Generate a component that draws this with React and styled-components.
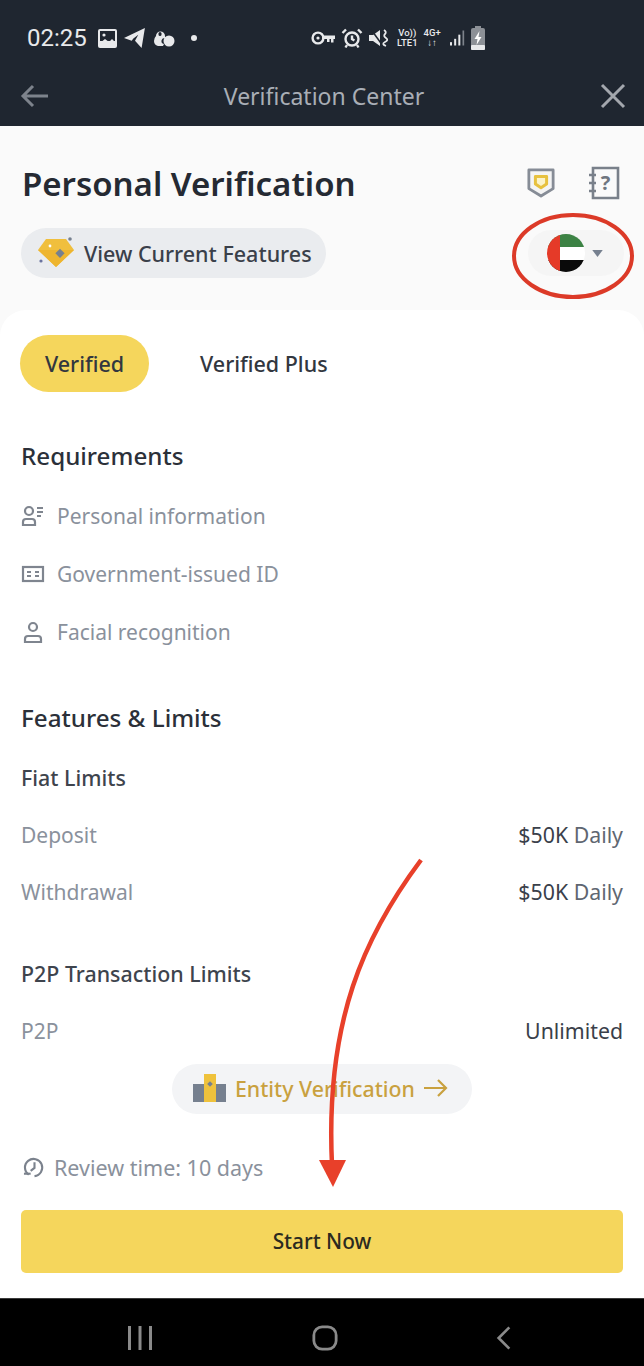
import React from "react";
import styled, { createGlobalStyle } from "styled-components";

const GlobalStyle = createGlobalStyle`
  html, body {
    margin: 0;
    padding: 0;
    background: #000;
  }
  * {
    box-sizing: border-box;
  }
  body {
    font-family: "Noto Sans", "Liberation Sans", sans-serif;
  }
`;

const Screen = styled.div`
  position: relative;
  width: 644px;
  height: 1366px;
  display: flex;
  flex-direction: column;
  overflow: hidden;
  background: #fafafa;
`;

const DarkTop = styled.div`
  height: 126px;
  background: #1f2630;
  flex-shrink: 0;
`;

const StatusBar = styled.div`
  height: 76px;
  padding-left: 27px;
  display: flex;
  align-items: center;
  color: #e8e9eb;
`;

const Clock = styled.span`
  font-family: Roboto, sans-serif;
  font-size: 24px;
  width: 71px;
`;

const NotifyIcons = styled.div`
  width: 213px;
  display: flex;
  align-items: center;
  gap: 7px;
`;

const SystemIcons = styled.div`
  display: flex;
  align-items: center;
  gap: 6px;
`;

const TinyStack = styled.span`
  display: flex;
  flex-direction: column;
  align-items: center;
  margin-right: ${(props) => props.$after || 0}px;
  font-family: Roboto, sans-serif;
  font-size: 9.5px;
  line-height: 10px;
  font-weight: 500;
  color: #e8e9eb;
`;

const Header = styled.div`
  height: 40px;
  padding: 0 18px 0 20px;
  display: flex;
  align-items: center;
  justify-content: space-between;
`;

const HeaderTitle = styled.span`
  font-size: 23px;
  color: #a9aeb6;
`;

const Summary = styled.div`
  height: 184px;
  padding: 31px 10px 0 22px;
  flex-shrink: 0;
`;

const TitleRow = styled.div`
  height: 52px;
  display: flex;
  align-items: center;
  justify-content: space-between;
`;

const PageTitle = styled.h1`
  margin: 0;
  font-size: 33px;
  font-weight: 600;
  color: #252a33;
`;

const TitleIcons = styled.div`
  display: flex;
  align-items: center;
  gap: 33px;
  padding-right: 14px;
`;

const SubRow = styled.div`
  margin-top: 19px;
  display: flex;
  align-items: center;
  justify-content: space-between;
`;

const FeaturesPill = styled.div`
  width: 305px;
  height: 50px;
  margin-left: -1px;
  padding-left: 16px;
  border-radius: 25px;
  background: #eaecef;
  display: flex;
  align-items: center;
  gap: 9px;
  font-size: 21.5px;
  font-weight: 500;
  color: #3a404a;
`;

const FlagPill = styled.div`
  width: 96px;
  height: 46px;
  margin-right: 10px;
  padding-left: 19px;
  border-radius: 23px;
  background: #f5f5f5;
  display: flex;
  align-items: center;
  gap: 7px;
`;

const Sheet = styled.div`
  flex: 1;
  padding: 25px 21px 0;
  background: #fff;
  border-radius: 26px 26px 0 0;
  display: flex;
  flex-direction: column;
`;

const Tabs = styled.div`
  display: flex;
  align-items: center;
  gap: 51px;
  margin-left: -1px;
`;

const Tab = styled.div`
  height: 57px;
  width: ${(props) => (props.$active ? "129px" : "auto")};
  border-radius: 29px;
  background: ${(props) => (props.$active ? "#f5d65c" : "transparent")};
  display: flex;
  align-items: center;
  justify-content: center;
  font-size: 21.5px;
  font-weight: 500;
  color: #32373f;
`;

const SectionTitle = styled.h2`
  margin: 0;
  height: 40px;
  margin-top: ${(props) => props.$top}px;
  display: flex;
  align-items: center;
  font-size: 24.2px;
  font-weight: 500;
  color: #2b3039;
`;

const GroupTitle = styled.h3`
  margin: 0;
  height: 40px;
  margin-top: ${(props) => props.$top}px;
  display: flex;
  align-items: center;
  font-size: 21.4px;
  font-weight: 500;
  color: #3e444d;
`;

const Requirement = styled.div`
  height: 58px;
  margin-top: ${(props) => props.$top || 0}px;
  display: flex;
  align-items: center;
  gap: 12px;
  font-size: 21px;
  color: #8a919c;
`;

const LimitRow = styled.div`
  height: 57px;
  margin-top: ${(props) => props.$top || 0}px;
  display: flex;
  align-items: center;
  justify-content: space-between;
  font-size: 21px;
  color: #8a919c;
`;

const LimitValue = styled.span`
  font-size: 21.3px;
  color: #3a404a;

  em {
    font-style: normal;
    color: #5f6671;
  }
`;

const EntityPill = styled.div`
  align-self: center;
  width: 300px;
  height: 50px;
  margin-top: 5px;
  padding: 0 0 2px 21px;
  border-radius: 25px;
  background: #f3f4f6;
  display: flex;
  align-items: center;
  gap: 9px;
  font-size: 21.3px;
  font-weight: 500;
  color: #c9a13f;
`;

const ReviewRow = styled.div`
  height: 46px;
  margin-top: 30px;
  padding-left: 2px;
  display: flex;
  align-items: center;
  gap: 8px;
  font-size: 21.5px;
  color: #8a919c;
`;

const StartButton = styled.button`
  height: 63px;
  margin-top: 20px;
  padding: 0 0 2px;
  border: 0;
  border-radius: 5px;
  background: #f5d65c;
  font-family: inherit;
  font-size: 20.8px;
  font-weight: 500;
  color: #2b2a20;
`;

const NavBar = styled.div`
  height: 68px;
  flex-shrink: 0;
  background: #000;
  border-top: 1px solid #3a3a3a;
  display: flex;
  align-items: center;
  justify-content: space-between;
  padding: 10px 132px 0 127px;
`;

const Annotation = styled.svg`
  position: absolute;
  left: 0;
  top: 0;
  pointer-events: none;
`;

const iconStroke = "#7f858f";

const KeyIcon = () => (
  <svg width="24" height="16" viewBox="0 0 24 16">
    <circle cx="7" cy="8" r="5.4" fill="none" stroke="#e8e9eb" strokeWidth="2.4" />
    <circle cx="7" cy="8" r="1.6" fill="#e8e9eb" />
    <path d="M11 5.500h13V9h-1.500v3.500h-2.500V9h-1.500v3h-2.500V9H11z" fill="#e8e9eb" />
  </svg>
);

const AlarmIcon = () => (
  <svg width="22" height="22" viewBox="0 0 22 22" fill="none" stroke="#e8e9eb" strokeWidth="2.4">
    <circle cx="11" cy="12" r="6.5" />
    <path d="M11 8.5V12l2.4 1.6M1.5 6 5 2.5M20.500 6 17 2.500M6 18l-1.500 2.500M16 18l1.500 2.500" />
  </svg>
);

const MuteIcon = () => (
  <svg width="22" height="22" viewBox="0 0 22 22" fill="#e8e9eb">
    <path d="M0 8h4l7-5v16l-7-5H0z" />
    <path d="M1 1l13 18" stroke="#1f2630" strokeWidth="1.5" />
    <path d="M15 3q3 2 1 4t1 4-1 4 1 4" fill="none" stroke="#e8e9eb" strokeWidth="1.8" />
  </svg>
);

const SignalIcon = () => (
  <svg width="15" height="20" viewBox="0 0 18 20" fill="#e8e9eb">
    <rect x="0" y="15" width="2.400" height="4" />
    <rect x="5" y="11" width="2.400" height="8" />
    <rect x="10" y="6" width="2.400" height="13" />
    <rect x="15" y="1" width="2" height="18" fill="#7d828a" />
  </svg>
);

const BatteryIcon = () => (
  <svg width="14" height="24" viewBox="0 0 14 24">
    <rect x="4" y="0" width="6" height="3" fill="#8c9096" />
    <rect x="0" y="2" width="14" height="22" rx="2" fill="#8c9096" />
    <rect x="0" y="19" width="14" height="5" rx="1" fill="#e8e9eb" />
    <path d="M8.500 5 3.500 13h3l-1 6 5-8h-3z" fill="#fff" />
  </svg>
);

const PictureIcon = () => (
  <svg width="19" height="19" viewBox="0 0 19 19">
    <rect width="19" height="19" rx="2" fill="#e8e9eb" />
    <rect x="2" y="2" width="15" height="10" fill="#1f2630" />
    <circle cx="6" cy="6" r="1.600" fill="#e8e9eb" />
    <path d="M2 14l5-4 4 3 3-3 3 3v4H2z" fill="#e8e9eb" />
  </svg>
);

const PlaneIcon = () => (
  <svg width="22" height="22" viewBox="0 0 20 20" fill="#e8e9eb">
    <path d="M19 1 0 10l7 2.500 1.500-2L13 7l-3 5.500 6 6.500z" />
  </svg>
);

const ChatIcon = () => (
  <svg width="22" height="18" viewBox="0 0 22 18" fill="#e8e9eb">
    <path d="M3 7a4.500 4.500 0 0 1 9 0v2a3 3 0 0 0-1 6l-1 2H5q-4-1-4-5 0-3 2-5z" />
    <rect x="5.500" y="3" width="3" height="4" rx="1.500" fill="#1f2630" />
    <circle cx="16" cy="12" r="5.500" />
  </svg>
);

const ShieldIcon = () => (
  <svg width="28" height="32" viewBox="0 0 30 32" fill="none">
    <path d="M2 2h26v20L15 30 2 22z" stroke="#868c96" strokeWidth="3" fill="#f4f4f4" strokeLinejoin="round" />
    <path d="M9 9h12v8l-6 4-6-4z" stroke="#e7c13f" strokeWidth="3.200" fill="#fbf3c9" strokeLinejoin="round" />
  </svg>
);

const GuideIcon = () => (
  <svg width="32" height="34" viewBox="0 0 32 34" fill="none" stroke="#79808a" strokeWidth="2.600">
    <path d="M5 2h25v30H5z" />
    <path d="M1 9h7M1 17h7M1 25h7" />
    <text x="17.500" y="24" textAnchor="middle" fontFamily="Noto Sans" fontWeight="700" fontSize="20" stroke="none" fill="#6f7680">?</text>
  </svg>
);

const DiamondIcon = () => (
  <svg width="38" height="32" viewBox="0 0 38 32">
    <path d="M9 2h20l8 11-18 17L1 13z" fill="#f0bf3d" />
    <path d="M1 13h36L19 30z" fill="#eeb52f" />
    <rect x="20" y="13" width="6.500" height="6.500" transform="rotate(45 23 16)" fill="#76808f" />
    <circle cx="13" cy="9" r="1.400" fill="#fff" />
    <circle cx="33" cy="2" r="1.800" fill="#76808f" />
    <circle cx="4" cy="24" r="1.600" fill="#6a73a0" />
  </svg>
);

const UaeFlag = () => (
  <svg width="38" height="38" viewBox="0 0 38 38">
    <defs>
      <clipPath id="flagClip">
        <circle cx="19" cy="19" r="19" />
      </clipPath>
    </defs>
    <g clipPath="url(#flagClip)">
      <rect width="38" height="13" fill="#3c8244" />
      <rect y="13" width="38" height="13" fill="#fff" />
      <rect y="26" width="38" height="12" fill="#0a0a0a" />
      <rect width="13" height="38" fill="#e53a28" />
    </g>
  </svg>
);

const Caret = () => (
  <svg width="11" height="7" viewBox="0 0 12 8">
    <path d="M0 0h12L6 8z" fill="#76808f" />
  </svg>
);

const PersonListIcon = () => (
  <svg width="24" height="22" viewBox="0 0 24 22" fill="none" stroke={iconStroke} strokeWidth="2.200">
    <circle cx="8" cy="6" r="4" />
    <path d="M2 20v-3a3 3 0 0 1 3-3h6a3 3 0 0 1 3 3v3z" />
    <path d="M16 3h6M16 7h6M16 11h4" />
  </svg>
);

const IdCardIcon = () => (
  <svg width="24" height="22" viewBox="0 0 24 22" fill="none" stroke={iconStroke} strokeWidth="2.200">
    <rect x="2" y="4" width="20" height="14" />
    <path d="M6 9h4M6 13h4M14 9h4M14 13h4" />
  </svg>
);

const PersonIcon = () => (
  <svg width="24" height="22" viewBox="0 0 24 22" fill="none" stroke={iconStroke} strokeWidth="2.200">
    <circle cx="12" cy="6" r="4" />
    <path d="M4 21v-3a3 3 0 0 1 3-3h10a3 3 0 0 1 3 3v3z" />
  </svg>
);

const BuildingIcon = () => (
  <svg width="33" height="28" viewBox="0 0 33 28">
    <rect x="0" y="10" width="33" height="18" fill="#76808f" />
    <rect x="11" y="0" width="12" height="28" fill="#efc23c" />
    <rect x="15" y="8" width="4" height="4" transform="rotate(45 17 10)" fill="#76808f" />
  </svg>
);

const ArrowRight = () => (
  <svg width="24" height="20" viewBox="0 0 24 20" fill="none" stroke="#c9a13f" strokeWidth="2.200">
    <path d="M0 10h22M14 2l8 8-8 8" />
  </svg>
);

const ClockBackIcon = () => (
  <svg width="23" height="24" viewBox="0 0 24 24" fill="none" stroke="#7b828d" strokeWidth="2.200">
    <path d="M6 20a9 9 0 1 1 6 1.500" />
    <path d="M12 7v6l-4 3" />
    <path d="M1 19h7" />
  </svg>
);

const App = () => (
  <Screen>
    <GlobalStyle />
    <DarkTop>
      <StatusBar>
        <Clock>02:25</Clock>
        <NotifyIcons>
          <PictureIcon />
          <PlaneIcon />
          <ChatIcon />
          <svg width="24" height="10" viewBox="0 0 24 10">
            <circle cx="12" cy="5" r="3" fill="#e8e9eb" />
          </svg>
        </NotifyIcons>
        <SystemIcons>
          <KeyIcon />
          <AlarmIcon />
          <MuteIcon />
          <TinyStack>
            <span>Vo))</span>
            <span>LTE1</span>
          </TinyStack>
          <TinyStack $after={3}>
            <span>4G+</span>
            <span>↓↑</span>
          </TinyStack>
          <SignalIcon />
          <BatteryIcon />
        </SystemIcons>
      </StatusBar>
      <Header>
        <svg width="28" height="24" viewBox="0 0 28 24" fill="none" stroke="#7d838c" strokeWidth="3">
          <path d="M28 12H3M13 2 3 12l10 10" />
        </svg>
        <HeaderTitle>Verification Center</HeaderTitle>
        <svg width="26" height="26" viewBox="0 0 26 26" fill="none" stroke="#a3a7ad" strokeWidth="3">
          <path d="M2 2l22 22M24 2 2 24" />
        </svg>
      </Header>
    </DarkTop>

    <Summary>
      <TitleRow>
        <PageTitle>Personal Verification</PageTitle>
        <TitleIcons>
          <ShieldIcon />
          <GuideIcon />
        </TitleIcons>
      </TitleRow>
      <SubRow>
        <FeaturesPill>
          <DiamondIcon />
          View Current Features
        </FeaturesPill>
        <FlagPill>
          <UaeFlag />
          <Caret />
        </FlagPill>
      </SubRow>
    </Summary>

    <Sheet>
      <Tabs>
        <Tab $active>Verified</Tab>
        <Tab>Verified Plus</Tab>
      </Tabs>

      <SectionTitle $top={43}>Requirements</SectionTitle>
      <Requirement $top={12}>
        <PersonListIcon />
        Personal information
      </Requirement>
      <Requirement>
        <IdCardIcon />
        Government-issued ID
      </Requirement>
      <Requirement>
        <PersonIcon />
        Facial recognition
      </Requirement>

      <SectionTitle $top={36}>Features &amp; Limits</SectionTitle>
      <GroupTitle $top={20}>Fiat Limits</GroupTitle>
      <LimitRow $top={9}>
        Deposit
        <LimitValue>$50K <em>Daily</em></LimitValue>
      </LimitRow>
      <LimitRow>
        Withdrawal
        <LimitValue>$50K <em>Daily</em></LimitValue>
      </LimitRow>

      <GroupTitle $top={33}>P2P Transaction Limits</GroupTitle>
      <LimitRow $top={9}>
        P2P
        <LimitValue>Unlimited</LimitValue>
      </LimitRow>

      <EntityPill>
        <BuildingIcon />
        Entity Verification
        <ArrowRight />
      </EntityPill>

      <ReviewRow>
        <ClockBackIcon />
        Review time: 10 days
      </ReviewRow>

      <StartButton>Start Now</StartButton>
    </Sheet>

    <NavBar>
      <svg width="26" height="26" viewBox="0 0 26 26" fill="#8a8a8a">
        <rect x="1" y="1" width="3" height="24" />
        <rect x="11.500" y="1" width="3" height="24" />
        <rect x="22" y="1" width="3" height="24" />
      </svg>
      <svg width="26" height="26" viewBox="0 0 28 28" fill="none" stroke="#8a8a8a" strokeWidth="3">
        <rect x="2" y="2" width="24" height="24" rx="9" />
      </svg>
      <svg width="16" height="26" viewBox="0 0 18 28" fill="none" stroke="#8a8a8a" strokeWidth="3">
        <path d="M15 2 3 14l12 12" />
      </svg>
    </NavBar>

    <Annotation width="644" height="1366" viewBox="0 0 644 1366" fill="none">
      <ellipse cx="573" cy="256" rx="59" ry="41" stroke="#dc3a28" strokeWidth="4" />
      <path d="M421 860C365 935 325 1020 332 1165" stroke="#e8402a" strokeWidth="4.500" />
      <path d="M319 1160h27l-13 27z" fill="#e8402a" />
    </Annotation>
  </Screen>
);

export default App;
